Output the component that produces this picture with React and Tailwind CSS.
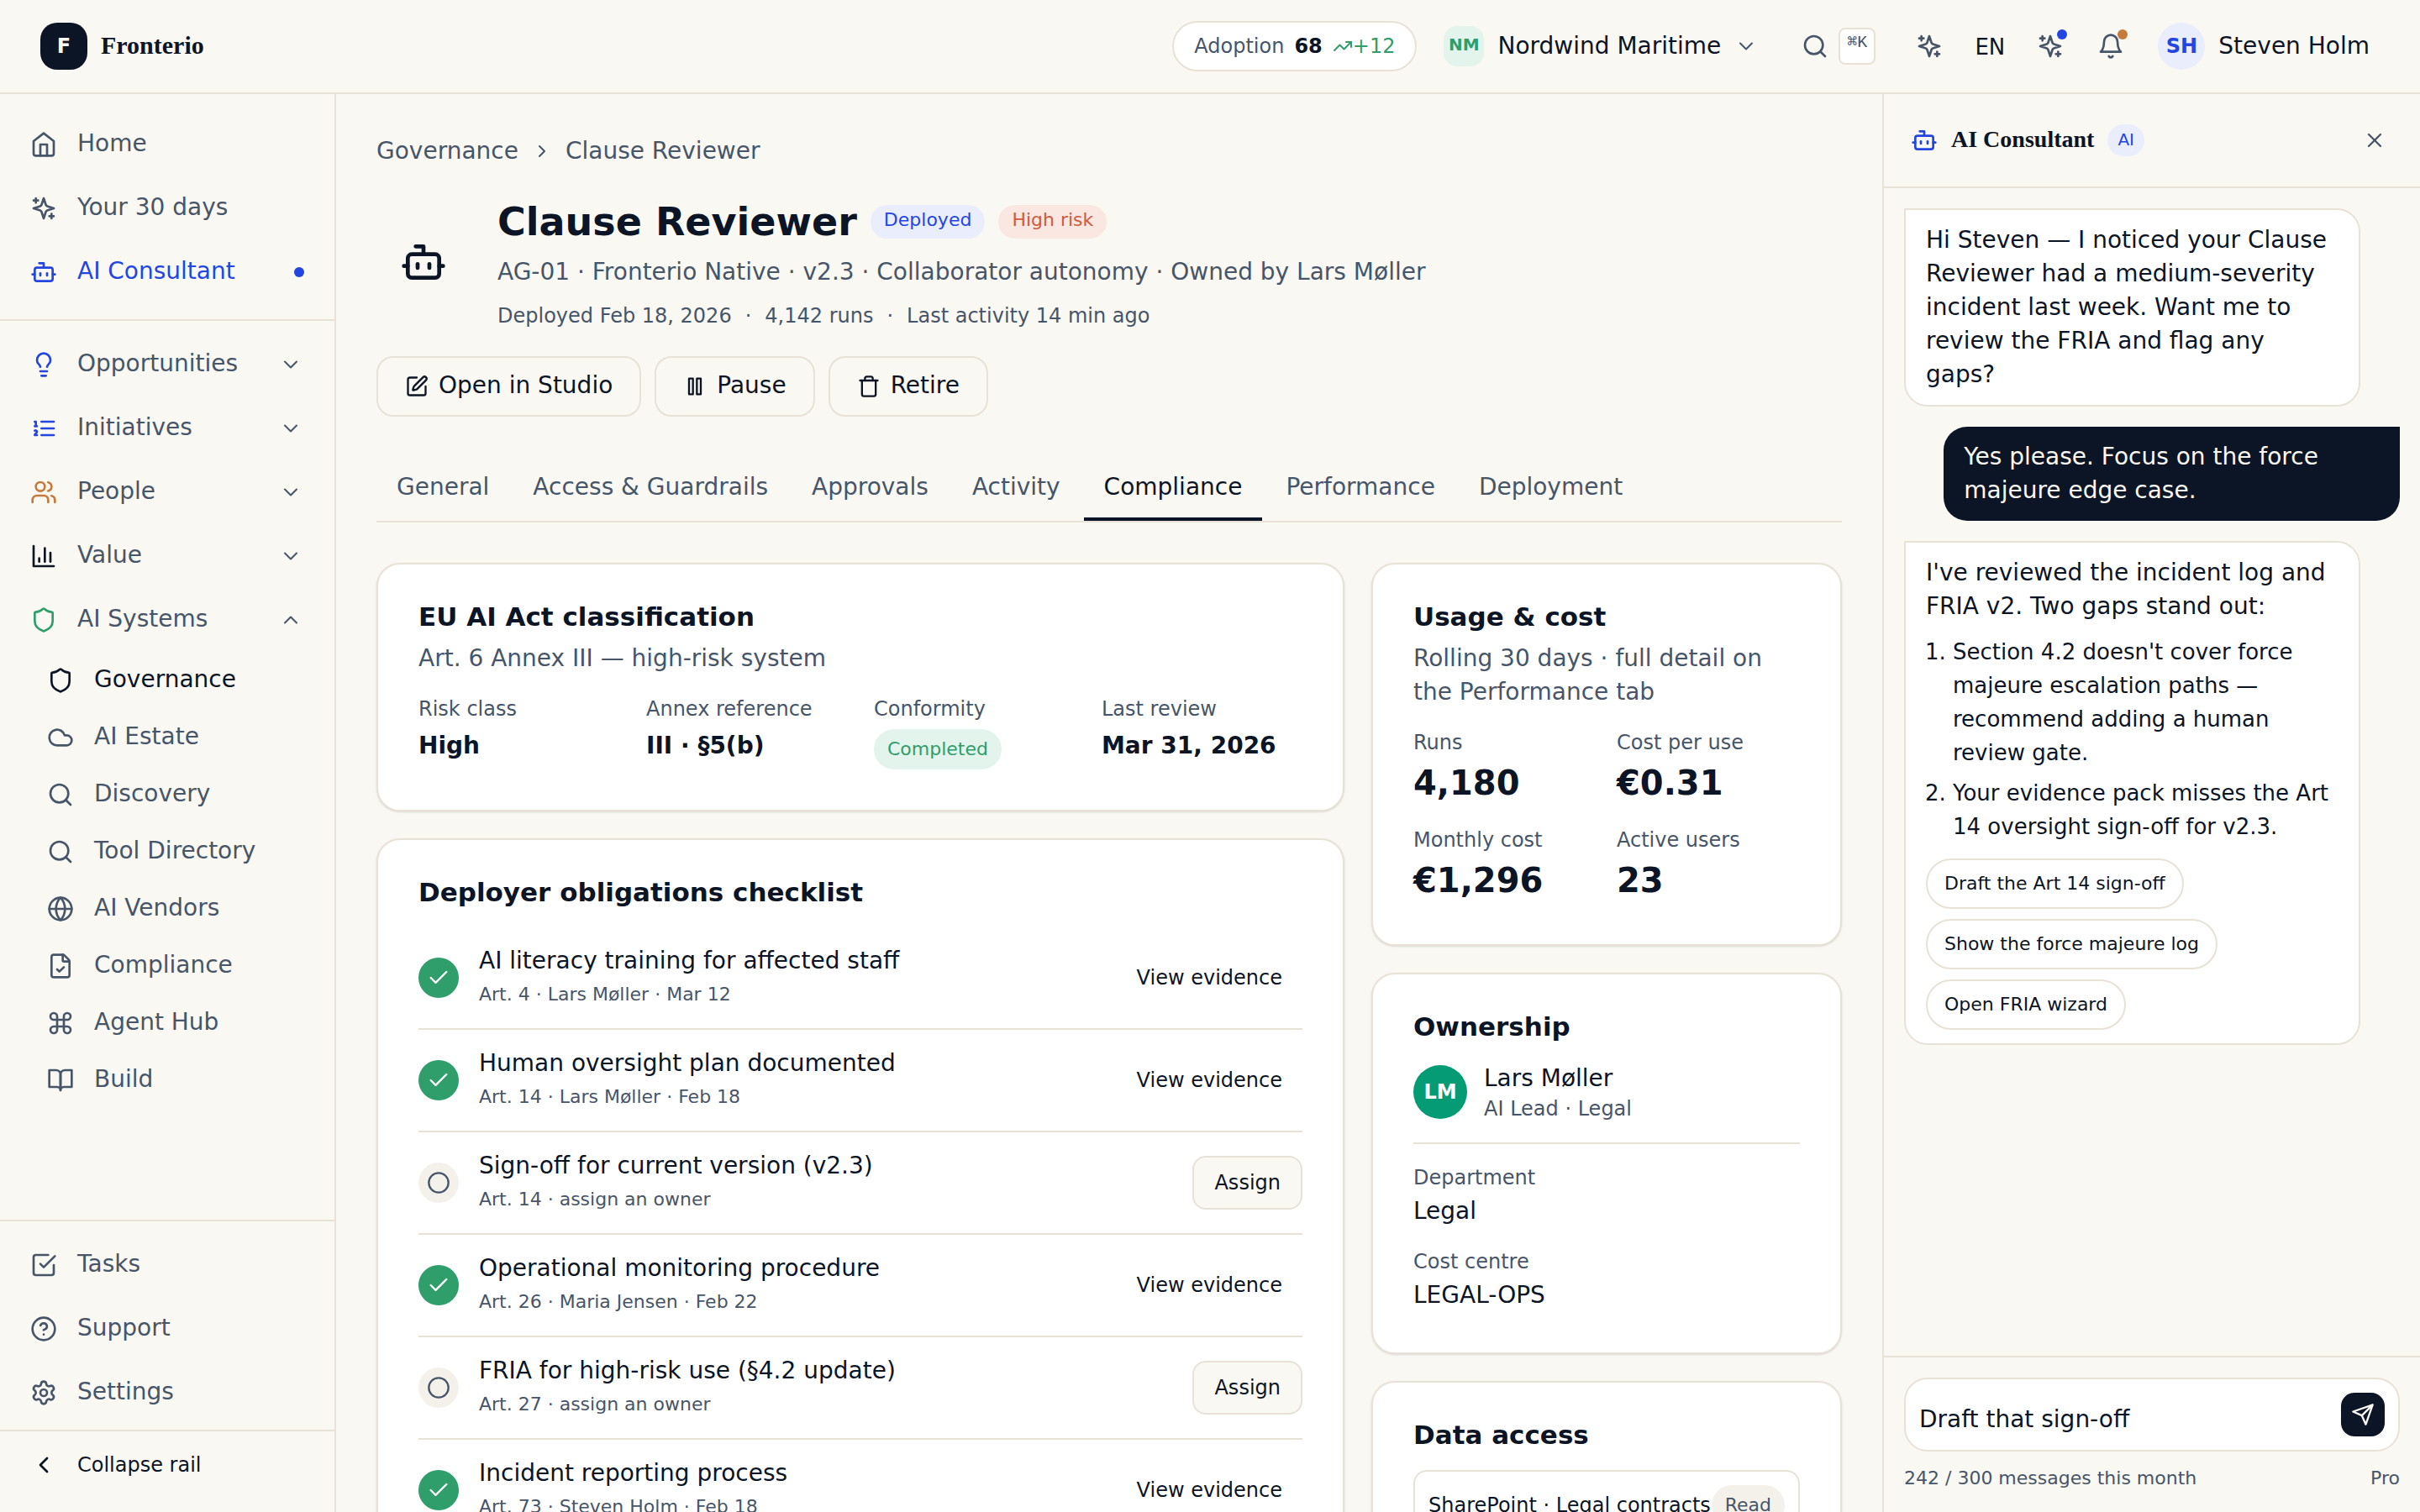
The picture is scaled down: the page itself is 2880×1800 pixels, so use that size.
import React, { useState } from "react";
import {
  Bot,
  Check,
  ChevronDown,
  ChevronLeft,
  ChevronRight,
  ChevronUp,
  Circle,
  Cloud,
  Command,
  FileCheck,
  Globe,
  Lightbulb,
  Search,
  Settings,
  Shield,
  SquarePen,
  Trash,
  TrendingUp,
  Users,
  X,
} from "lucide-react";

const Icon = ({ className = "size-8", children }) => (
  <svg
    viewBox="0 0 24 24"
    fill="none"
    stroke="currentColor"
    strokeWidth="2"
    strokeLinecap="round"
    strokeLinejoin="round"
    aria-hidden="true"
    className={className}
  >
    {children}
  </svg>
);

const HomeIcon = ({ className }) => (
  <Icon className={className}>
    <path d="m3 9 9-7 9 7v11a2 2 0 0 1-2 2H5a2 2 0 0 1-2-2z" />
    <path d="M9 22V12h6v10" />
  </Icon>
);

const SparklesIcon = ({ className }) => (
  <Icon className={className}>
    <path d="m12 3-1.912 5.813a2 2 0 0 1-1.275 1.275L3 12l5.813 1.912a2 2 0 0 1 1.275 1.275L12 21l1.912-5.813a2 2 0 0 1 1.275-1.275L21 12l-5.813-1.912a2 2 0 0 1-1.275-1.275L12 3Z" />
    <path d="M5 3v4M19 17v4M3 5h4M17 19h4" />
  </Icon>
);

const BellIcon = ({ className }) => (
  <Icon className={className}>
    <path d="M6 8a6 6 0 0 1 12 0c0 7 3 9 3 9H3s3-2 3-9" />
    <path d="M10.3 21a1.94 1.94 0 0 0 3.4 0" />
  </Icon>
);

const ListIcon = ({ className }) => (
  <Icon className={className}>
    <path d="M10 6h11M10 12h11M10 18h11M4 6h1v4M4 10h2" />
    <path d="M6 18H4c0-1 2-2 2-3s-1-1.500-2-1" />
  </Icon>
);

const ChartIcon = ({ className }) => (
  <Icon className={className}>
    <path d="M3 3v18h18M18 17V9M13 17V5M8 17v-3" />
  </Icon>
);

const BookIcon = ({ className }) => (
  <Icon className={className}>
    <path d="M2 3h6a4 4 0 0 1 4 4v14a3 3 0 0 0-3-3H2z" />
    <path d="M22 3h-6a4 4 0 0 0-4 4v14a3 3 0 0 1 3-3h7z" />
  </Icon>
);

const TasksIcon = ({ className }) => (
  <Icon className={className}>
    <path d="m9 11 3 3L22 4" />
    <path d="M21 12v7a2 2 0 0 1-2 2H5a2 2 0 0 1-2-2V5a2 2 0 0 1 2-2h11" />
  </Icon>
);

const HelpIcon = ({ className }) => (
  <Icon className={className}>
    <circle cx="12" cy="12" r="10" />
    <path d="M9.090 9a3 3 0 0 1 5.830 1c0 2-3 3-3 3M12 17h.01" />
  </Icon>
);

const PauseIcon = ({ className }) => (
  <Icon className={className}>
    <rect x="6" y="4" width="4" height="16" />
    <rect x="14" y="4" width="4" height="16" />
  </Icon>
);

const SendIcon = ({ className }) => (
  <Icon className={className}>
    <path d="m22 2-7 20-4-9-9-4ZM22 2 11 13" />
  </Icon>
);

const groups = [
  { label: "Opportunities", icon: Lightbulb, color: "text-[#2346e0]" },
  { label: "Initiatives", icon: ListIcon, color: "text-[#2346e0]" },
  { label: "People", icon: Users, color: "text-[#c77b3b]" },
  { label: "Value", icon: ChartIcon, color: "text-[#0c1525]" },
  { label: "AI Systems", icon: Shield, color: "text-[#2f9e6a]", open: true },
];

const systems = [
  { label: "Governance", icon: Shield, active: true },
  { label: "AI Estate", icon: Cloud },
  { label: "Discovery", icon: Search },
  { label: "Tool Directory", icon: Search },
  { label: "AI Vendors", icon: Globe },
  { label: "Compliance", icon: FileCheck },
  { label: "Agent Hub", icon: Command },
  { label: "Build", icon: BookIcon },
];

const footerLinks = [
  { label: "Tasks", icon: TasksIcon },
  { label: "Support", icon: HelpIcon },
  { label: "Settings", icon: Settings },
];

const tabs = [
  "General",
  "Access & Guardrails",
  "Approvals",
  "Activity",
  "Compliance",
  "Performance",
  "Deployment",
];

const obligations = [
  { title: "AI literacy training for affected staff", meta: "Art. 4 · Lars Møller · Mar 12", done: true },
  { title: "Human oversight plan documented", meta: "Art. 14 · Lars Møller · Feb 18", done: true },
  { title: "Sign-off for current version (v2.3)", meta: "Art. 14 · assign an owner", done: false },
  { title: "Operational monitoring procedure", meta: "Art. 26 · Maria Jensen · Feb 22", done: true },
  { title: "FRIA for high-risk use (§4.2 update)", meta: "Art. 27 · assign an owner", done: false },
  { title: "Incident reporting process", meta: "Art. 73 · Steven Holm · Feb 18", done: true },
];

const usage = [
  { label: "Runs", value: "4,180" },
  { label: "Cost per use", value: "€0.31" },
  { label: "Monthly cost", value: "€1,296" },
  { label: "Active users", value: "23" },
];

const RailLink = ({ icon: Glyph, label, className = "", children }) => (
  <a href="#" className={`flex h-[72px] items-center gap-6 px-3 ${className}`}>
    <Glyph className="size-8 shrink-0" />
    <span className="pb-0.5">{label}</span>
    {children}
  </a>
);

const Card = ({ title, children }) => (
  <section className="rounded-[28px] border-2 border-[#e8e2d6] bg-white p-12 shadow-sm">
    <h2 className="pb-1 text-[31px] leading-7 font-bold">{title}</h2>
    {children}
  </section>
);

const ActionButton = ({ icon: Glyph, children }) => (
  <button className="flex h-[72px] items-center gap-3 rounded-[20px] border-2 border-[#e8e2d6] px-8">
    <Glyph className="size-7" />
    <span className="pb-0.5">{children}</span>
  </button>
);

const Header = () => (
  <header className="flex h-28 shrink-0 items-center justify-between border-b-2 border-[#e8e2d6] px-12">
    <a href="#" className="flex items-center gap-4">
      <span className="flex size-14 items-center justify-center rounded-[20px] bg-[#0c1525] text-2xl font-bold text-[#faf8f3]">
        F
      </span>
      <span className="pb-0.5 font-['Liberation_Serif',serif] text-[30px] leading-10 font-bold">Fronterio</span>
    </a>

    <div className="flex items-center gap-4">
      <div className="flex h-[60px] items-center gap-3 rounded-full border-2 border-[#e8e2d6] bg-white px-6 text-2xl">
        <span className="text-[#475569]">Adoption</span>
        <strong className="font-bold">68</strong>
        <span className="flex items-center text-[#2f9e6a]">
          <TrendingUp className="size-6" />
          +12
        </span>
      </div>

      <button className="flex items-center gap-4 pl-4">
        <span className="flex size-12 items-center justify-center rounded-2xl bg-[#e3f4ec] pb-1 text-xl font-bold text-[#2f9e6a]">
          NM
        </span>
        Nordwind Maritime
        <ChevronDown className="size-7 text-[#475569]" strokeWidth={1.75} />
      </button>

      <button className="ml-4 flex items-center gap-3 px-5 text-[#475569]" aria-label="Search">
        <Search className="size-8" />
        <kbd className="flex h-11 items-start rounded-lg border-2 border-[#e8e2d6] bg-white px-2 font-['Liberation_Mono','DejaVu_Sans_Mono',monospace] text-xl leading-8">
          ⌘K
        </kbd>
      </button>

      <button className="flex size-14 items-center justify-center text-[#475569]" aria-label="What's new">
        <SparklesIcon className="size-8" />
      </button>
      <button className="flex size-14 items-center justify-center pt-0.5 text-[26px]">EN</button>
      <button className="relative flex size-14 items-center justify-center text-[#475569]" aria-label="Assistant">
        <SparklesIcon className="size-8" />
        <span className="absolute top-2 right-2 size-3 rounded-full bg-[#2346e0]" />
      </button>
      <button className="relative flex size-14 items-center justify-center text-[#475569]" aria-label="Notifications">
        <BellIcon className="size-8" />
        <span className="absolute top-2 right-2 size-3 rounded-full bg-[#c77b3b]" />
      </button>

      <button className="flex items-center gap-4 px-3">
        <span className="flex size-14 items-center justify-center rounded-full bg-[#e9edfc] text-2xl font-bold text-[#2346e0]">
          SH
        </span>
        Steven Holm
      </button>
    </div>
  </header>
);

const Rail = () => (
  <aside className="flex w-[400px] shrink-0 flex-col border-r-2 border-[#e8e2d6] text-[#475569]">
    <nav className="flex min-h-0 flex-1 flex-col" aria-label="Main">
      <div className="flex flex-col gap-1 border-b-2 border-[#e8e2d6] px-6 pt-6 pb-5">
        <RailLink icon={HomeIcon} label="Home" />
        <RailLink icon={SparklesIcon} label="Your 30 days" />
        <RailLink icon={Bot} label="AI Consultant" className="text-[#2346e0]">
          <span className="ml-auto size-3 rounded-full bg-[#2346e0]" />
        </RailLink>
      </div>

      <div className="flex flex-col gap-1 px-6 pt-4">
        {groups.map(({ label, icon: Glyph, color, open }) => (
          <button key={label} className="flex h-[72px] items-center gap-6 px-3" aria-expanded={!!open}>
            <Glyph className={`size-8 shrink-0 ${color}`} />
            <span className="pb-0.5">{label}</span>
            <span className="ml-auto p-0.5">
              {open ? (
                <ChevronUp className="size-7" strokeWidth={1.75} />
              ) : (
                <ChevronDown className="size-7" strokeWidth={1.75} />
              )}
            </span>
          </button>
        ))}
        {systems.map(({ label, icon: Glyph, active }) => (
          <a
            key={label}
            href="#"
            className={`flex h-16 items-center gap-6 pl-8 ${active ? "text-[#0c1525]" : ""}`}
          >
            <Glyph className="size-8 shrink-0" />
            <span className="pb-0.5">{label}</span>
          </a>
        ))}
      </div>
    </nav>

    <div className="flex flex-col gap-1 border-t-2 border-[#e8e2d6] px-6 pt-4 pb-2">
      {footerLinks.map((link) => (
        <RailLink key={link.label} icon={link.icon} label={link.label} />
      ))}
    </div>
    <div className="border-t-2 border-[#e8e2d6] px-6 pt-2 pb-6">
      <button className="flex h-16 w-full items-center gap-6 px-3 text-2xl text-[#0c1525]">
        <ChevronLeft className="size-8" />
        Collapse rail
      </button>
    </div>
  </aside>
);

const AgentHeader = () => (
  <>
    <nav className="flex items-center gap-4 text-[#475569]" aria-label="Breadcrumb">
      <a href="#">Governance</a>
      <ChevronRight className="size-6" />
      <span>Clause Reviewer</span>
    </nav>

    <div className="mt-8 flex items-center gap-8">
      <span className="flex size-28 items-center justify-center">
        <Bot className="size-14" />
      </span>
      <div>
        <div className="flex h-16 items-center gap-4">
          <h1 className="text-[46px] leading-[56px] font-bold">Clause Reviewer</h1>
          <span className="rounded-full bg-[#e9edfc] px-4 pt-0.5 pb-1.5 text-[22px] leading-8 text-[#2346e0]">
            Deployed
          </span>
          <span className="rounded-full bg-[#fae7e1] px-4 pt-0.5 pb-1.5 text-[22px] leading-8 text-[#cf5a3c]">
            High risk
          </span>
        </div>
        <p className="mt-2 text-[#475569]">
          AG-01 · Fronterio Native · v2.3 · Collaborator autonomy · Owned by Lars Møller
        </p>
        <p className="mt-4 flex gap-4 text-2xl leading-8 text-[#475569]">
          <span>Deployed Feb 18, 2026</span>
          <span>·</span>
          <span>4,142 runs</span>
          <span>·</span>
          <span>Last activity 14 min ago</span>
        </p>
      </div>
    </div>

    <div className="mt-8 flex gap-4">
      <ActionButton icon={SquarePen}>Open in Studio</ActionButton>
      <ActionButton icon={PauseIcon}>Pause</ActionButton>
      <ActionButton icon={Trash}>Retire</ActionButton>
    </div>
  </>
);

const Classification = () => (
  <Card title="EU AI Act classification">
    <p className="mt-3 text-[#475569]">Art. 6 Annex III — high-risk system</p>
    <dl className="mt-6 grid grid-cols-4 gap-8">
      <div>
        <dt className="text-2xl leading-8 text-[#475569]">Risk class</dt>
        <dd className="mt-2 font-bold">High</dd>
      </div>
      <div>
        <dt className="text-2xl leading-8 text-[#475569]">Annex reference</dt>
        <dd className="mt-2 font-bold">III · §5(b)</dd>
      </div>
      <div>
        <dt className="text-2xl leading-8 text-[#475569]">Conformity</dt>
        <dd className="mt-2 flex">
          <span className="rounded-full bg-[#e3f4ec] px-4 py-2 text-[22px] leading-8 text-[#2f9e6a]">Completed</span>
        </dd>
      </div>
      <div>
        <dt className="text-2xl leading-8 text-[#475569]">Last review</dt>
        <dd className="mt-2 font-bold">Mar 31, 2026</dd>
      </div>
    </dl>
  </Card>
);

const Checklist = () => (
  <Card title="Deployer obligations checklist">
    <ul className="mt-6">
      {obligations.map((item) => (
        <li key={item.title} className="flex items-center gap-6 border-b-2 border-[#e8e2d6] py-5">
          {item.done ? (
            <span className="flex size-12 items-center justify-center rounded-full bg-[#2f9e6a] text-white">
              <Check className="size-7" />
            </span>
          ) : (
            <span className="flex size-12 items-center justify-center rounded-full bg-[#f4f1ea] text-[#475569]">
              <Circle className="size-7" />
            </span>
          )}
          <div className="flex-1">
            <p>{item.title}</p>
            <p className="text-[22px] text-[#475569]">{item.meta}</p>
          </div>
          {item.done ? (
            <button className="h-16 rounded-2xl px-6 text-2xl">View evidence</button>
          ) : (
            <button className="h-16 rounded-2xl border-2 border-[#e8e2d6] bg-[#faf8f3] px-6 text-2xl">Assign</button>
          )}
        </li>
      ))}
    </ul>
  </Card>
);

const SideColumn = () => (
  <div className="flex flex-col gap-8">
    <Card title="Usage & cost">
      <p className="mt-3 text-[#475569]">Rolling 30 days · full detail on the Performance tab</p>
      <dl className="mt-6 grid grid-cols-2 gap-6">
        {usage.map((item) => (
          <div key={item.label}>
            <dt className="text-2xl leading-8 text-[#475569]">{item.label}</dt>
            <dd className="mt-2 pb-1 text-[40px] leading-[48px] font-bold">{item.value}</dd>
          </div>
        ))}
      </dl>
    </Card>

    <Card title="Ownership">
      <div className="mt-6 flex items-center gap-5 border-b-2 border-[#e8e2d6] pb-6">
        <span className="flex size-16 items-center justify-center rounded-full bg-[#059b74] text-2xl font-bold text-white">
          LM
        </span>
        <div>
          <p>Lars Møller</p>
          <p className="text-2xl leading-8 text-[#475569]">AI Lead · Legal</p>
        </div>
      </div>
      <dl className="mt-6 flex flex-col gap-6">
        <div>
          <dt className="text-2xl leading-8 text-[#475569]">Department</dt>
          <dd className="mt-1">Legal</dd>
        </div>
        <div>
          <dt className="text-2xl leading-8 text-[#475569]">Cost centre</dt>
          <dd className="mt-1">LEGAL-OPS</dd>
        </div>
      </dl>
    </Card>

    <Card title="Data access">
      <div className="mt-6 flex items-center justify-between rounded-2xl border-2 border-[#e8e2d6] p-4">
        <span className="text-2xl whitespace-nowrap">SharePoint · Legal contracts</span>
        <span className="rounded-full bg-[#f4f1ea] px-4 py-2 text-[22px] leading-8 text-[#475569]">Read</span>
      </div>
    </Card>
  </div>
);

const Suggestion = ({ children }) => (
  <button className="h-[60px] rounded-full border-2 border-[#e8e2d6] px-5 text-[22px]">{children}</button>
);

const Consultant = () => {
  const [draft, setDraft] = useState("Draft that sign-off");

  return (
    <aside className="flex w-[640px] shrink-0 flex-col border-l-2 border-[#e8e2d6]">
      <div className="flex h-28 shrink-0 items-center gap-4 border-b-2 border-[#e8e2d6] px-8">
        <Bot className="size-8 text-[#2346e0]" />
        <h2 className="pb-0.5 font-['Liberation_Serif',serif] text-[28px] leading-10 font-bold">AI Consultant</h2>
        <span className="rounded-full bg-[#e9edfc] px-3 pt-0.5 pb-1 text-xl leading-8 text-[#2346e0]">AI</span>
        <button className="ml-auto flex size-11 items-center justify-center text-[#475569]" aria-label="Close">
          <X className="size-7" />
        </button>
      </div>

      <div className="flex min-h-0 flex-1 flex-col gap-6 p-6">
        <div className="w-[92%] rounded-[28px] rounded-tl-none border-2 border-[#e8e2d6] bg-white px-6 py-4">
          Hi Steven — I noticed your Clause Reviewer had a medium-severity incident last week. Want me to review the
          FRIA and flag any gaps?
        </div>
        <div className="w-[92%] self-end rounded-[28px] rounded-tr-none bg-[#0c1525] px-6 py-4 text-[#faf8f3]">
          Yes please. Focus on the force majeure edge case.
        </div>
        <div className="w-[92%] rounded-[28px] rounded-tl-none border-2 border-[#e8e2d6] bg-white px-6 py-4">
          <p>I've reviewed the incident log and FRIA v2. Two gaps stand out:</p>
          <ol className="mt-3.5 flex list-decimal flex-col gap-2 pl-8 text-[26px]">
            <li>Section 4.2 doesn't cover force majeure escalation paths — recommend adding a human review gate.</li>
            <li>Your evidence pack misses the Art 14 oversight sign-off for v2.3.</li>
          </ol>
          <div className="mt-[18px] flex flex-col items-start gap-3">
            <Suggestion>Draft the Art 14 sign-off</Suggestion>
            <Suggestion>Show the force majeure log</Suggestion>
            <Suggestion>Open FRIA wizard</Suggestion>
          </div>
        </div>
      </div>

      <div className="border-t-2 border-[#e8e2d6] p-6">
        <div className="flex gap-4 rounded-[28px] border-2 border-[#e8e2d6] bg-white p-4">
          <textarea
            rows={1}
            value={draft}
            onChange={(e) => setDraft(e.target.value)}
            aria-label="Message"
            className="h-[52px] min-w-0 flex-1 resize-none overflow-hidden pt-3 outline-none"
          />
          <button
            className="flex size-[52px] items-center justify-center rounded-2xl bg-[#0c1525] text-[#faf8f3]"
            aria-label="Send"
          >
            <SendIcon className="size-7" />
          </button>
        </div>
        <div className="mt-4 flex justify-between text-[22px] leading-8 text-[#475569]">
          <span>242 / 300 messages this month</span>
          <span>Pro</span>
        </div>
      </div>
    </aside>
  );
};

const App = () => {
  const [tab, setTab] = useState("Compliance");

  return (
    <div className="flex h-screen flex-col overflow-hidden bg-[#faf8f3] font-['DejaVu_Sans',sans-serif] text-[28px] leading-10 text-[#0c1525]">
      <Header />
      <div className="flex min-h-0 flex-1">
        <Rail />
        <main className="min-w-0 flex-1 overflow-hidden p-12">
          <AgentHeader />

          <div className="mt-12 flex gap-1 border-b-2 border-[#e8e2d6]" role="tablist">
            {tabs.map((name) => (
              <button
                key={name}
                role="tab"
                aria-selected={tab === name}
                onClick={() => setTab(name)}
                className={`border-b-4 px-6 py-4 ${
                  tab === name ? "border-[#0c1525] text-[#0c1525]" : "border-transparent text-[#475569]"
                }`}
              >
                {name}
              </button>
            ))}
          </div>

          <div className="mt-12 grid grid-cols-[minmax(0,1fr)_560px] items-start gap-8">
            <div className="flex flex-col gap-8">
              <Classification />
              <Checklist />
            </div>
            <SideColumn />
          </div>
        </main>
        <Consultant />
      </div>
    </div>
  );
};

export default App;
